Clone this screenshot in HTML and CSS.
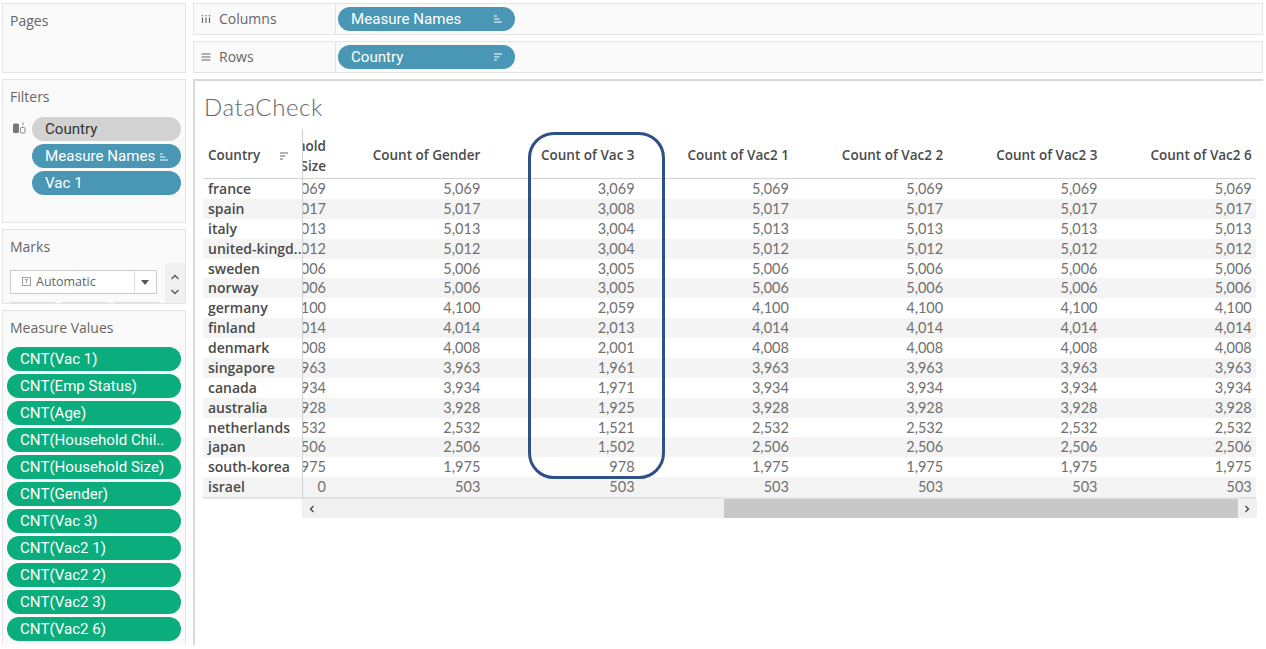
FILE: index.html
```html
<!DOCTYPE html>
<html lang="en">
<head>
    <meta charset="UTF-8">
    <title>DataCheck</title>
    <link rel="stylesheet" href="styles.css">
</head>
<body>
    <div class="app">
        <aside class="side">
            <section class="panel pages-panel">
                <h2 class="panel-title">Pages</h2>
            </section>
            <section class="panel filters-panel">
                <h2 class="panel-title">Filters</h2>
                <div class="filter-list">
                    <svg class="ds-icon" viewBox="0 0 14 14"><path d="M1 3.500C1 2 7 2 7 3.500V11c0 1.500-6 1.500-6 0z" fill="#777"/><rect x="8.500" y="6.500" width="4.500" height="5.500" rx="1" fill="none" stroke="#888"/><path d="M11 1.500v3" stroke="#888"/></svg>
                    <div class="pill pill-grey">Country</div>
                    <div class="pill pill-blue">Measure Names <svg class="sort-icon" viewBox="0 0 10 8"><path d="M1 1h3M1 4h5.500M1 7h8" stroke="#fff"/></svg></div>
                    <div class="pill pill-blue">Vac 1</div>
                </div>
            </section>
            <section class="panel marks-panel">
                <h2 class="panel-title">Marks</h2>
                <div class="marks-row">
                    <div class="mark-select">
                        <span class="mark-type"><svg class="mark-icon" viewBox="0 0 10 10"><rect x="0.500" y="0.500" width="9" height="9" fill="none" stroke="#999"/><path d="M3 3h4M5 3v4" stroke="#999"/></svg>Automatic</span>
                        <span class="mark-arrow"></span>
                    </div>
                    <div class="mark-scroll">
                        <svg viewBox="0 0 10 6"><path d="M1.500 5L5 1.500 8.500 5" fill="none" stroke="#555" stroke-width="1.300"/></svg>
                        <svg viewBox="0 0 10 6"><path d="M1.500 1L5 4.500 8.500 1" fill="none" stroke="#555" stroke-width="1.300"/></svg>
                    </div>
                </div>
                <div class="mark-buttons"><span></span><span></span><span></span></div>
            </section>
            <section class="panel values-panel">
                <h2 class="panel-title">Measure Values</h2>
                <div class="value-list">
                    <div class="pill pill-green">CNT(Vac 1)</div>
                    <div class="pill pill-green">CNT(Emp Status)</div>
                    <div class="pill pill-green">CNT(Age)</div>
                    <div class="pill pill-green">CNT(Household Chil..</div>
                    <div class="pill pill-green">CNT(Household Size)</div>
                    <div class="pill pill-green">CNT(Gender)</div>
                    <div class="pill pill-green">CNT(Vac 3)</div>
                    <div class="pill pill-green">CNT(Vac2 1)</div>
                    <div class="pill pill-green">CNT(Vac2 2)</div>
                    <div class="pill pill-green">CNT(Vac2 3)</div>
                    <div class="pill pill-green">CNT(Vac2 6)</div>
                </div>
            </section>
        </aside>

        <main class="main">
            <div class="shelf">
                <div class="shelf-label"><svg class="shelf-icon" viewBox="0 0 10 10"><path d="M1.500 3.500V9M5 3.500V9M8.500 3.500V9M1.500 1v1.300M5 1v1.300M8.500 1v1.300" stroke="#666" stroke-width="1.200"/></svg>Columns</div>
                <div class="pill pill-blue shelf-pill">Measure Names <svg class="sort-icon" viewBox="0 0 10 8"><path d="M1 1h3M1 4h5.500M1 7h8" stroke="#fff"/></svg></div>
            </div>
            <div class="shelf">
                <div class="shelf-label"><svg class="shelf-icon" viewBox="0 0 10 10"><path d="M0.500 2h9M0.500 5h9M0.500 8h9" stroke="#666" stroke-width="1.200"/></svg>Rows</div>
                <div class="pill pill-blue shelf-pill">Country <svg class="sort-icon" viewBox="0 0 10 8"><path d="M1 1h8M1 4h5.500M1 7h3" stroke="#fff"/></svg></div>
            </div>

            <section class="view">
                <h1 class="view-title">DataCheck</h1>
                <div class="crosstab">
                    <div class="row head">
                        <div class="cell name">Country <svg class="head-sort" viewBox="0 0 10 8"><path d="M1 1h8M1 4h5.500M1 7h3" stroke="#666"/></svg></div>
                        <div class="cell clip wrap"><span>Household<br>Size</span></div>
                        <div class="cell">Count of Gender</div>
                        <div class="cell">Count of Vac 3</div>
                        <div class="cell">Count of Vac2 1</div>
                        <div class="cell">Count of Vac2 2</div>
                        <div class="cell">Count of Vac2 3</div>
                        <div class="cell">Count of Vac2 6</div>
                    </div>
                    <div class="row"><div class="cell name">france</div><div class="cell clip">5,069</div><div class="cell">5,069</div><div class="cell">3,069</div><div class="cell">5,069</div><div class="cell">5,069</div><div class="cell">5,069</div><div class="cell">5,069</div></div>
                    <div class="row"><div class="cell name">spain</div><div class="cell clip">5,017</div><div class="cell">5,017</div><div class="cell">3,008</div><div class="cell">5,017</div><div class="cell">5,017</div><div class="cell">5,017</div><div class="cell">5,017</div></div>
                    <div class="row"><div class="cell name">italy</div><div class="cell clip">5,013</div><div class="cell">5,013</div><div class="cell">3,004</div><div class="cell">5,013</div><div class="cell">5,013</div><div class="cell">5,013</div><div class="cell">5,013</div></div>
                    <div class="row"><div class="cell name">united-kingd..</div><div class="cell clip">5,012</div><div class="cell">5,012</div><div class="cell">3,004</div><div class="cell">5,012</div><div class="cell">5,012</div><div class="cell">5,012</div><div class="cell">5,012</div></div>
                    <div class="row"><div class="cell name">sweden</div><div class="cell clip">5,006</div><div class="cell">5,006</div><div class="cell">3,005</div><div class="cell">5,006</div><div class="cell">5,006</div><div class="cell">5,006</div><div class="cell">5,006</div></div>
                    <div class="row"><div class="cell name">norway</div><div class="cell clip">5,006</div><div class="cell">5,006</div><div class="cell">3,005</div><div class="cell">5,006</div><div class="cell">5,006</div><div class="cell">5,006</div><div class="cell">5,006</div></div>
                    <div class="row"><div class="cell name">germany</div><div class="cell clip">4,100</div><div class="cell">4,100</div><div class="cell">2,059</div><div class="cell">4,100</div><div class="cell">4,100</div><div class="cell">4,100</div><div class="cell">4,100</div></div>
                    <div class="row"><div class="cell name">finland</div><div class="cell clip">4,014</div><div class="cell">4,014</div><div class="cell">2,013</div><div class="cell">4,014</div><div class="cell">4,014</div><div class="cell">4,014</div><div class="cell">4,014</div></div>
                    <div class="row"><div class="cell name">denmark</div><div class="cell clip">4,008</div><div class="cell">4,008</div><div class="cell">2,001</div><div class="cell">4,008</div><div class="cell">4,008</div><div class="cell">4,008</div><div class="cell">4,008</div></div>
                    <div class="row"><div class="cell name">singapore</div><div class="cell clip">3,963</div><div class="cell">3,963</div><div class="cell">1,961</div><div class="cell">3,963</div><div class="cell">3,963</div><div class="cell">3,963</div><div class="cell">3,963</div></div>
                    <div class="row"><div class="cell name">canada</div><div class="cell clip">3,934</div><div class="cell">3,934</div><div class="cell">1,971</div><div class="cell">3,934</div><div class="cell">3,934</div><div class="cell">3,934</div><div class="cell">3,934</div></div>
                    <div class="row"><div class="cell name">australia</div><div class="cell clip">3,928</div><div class="cell">3,928</div><div class="cell">1,925</div><div class="cell">3,928</div><div class="cell">3,928</div><div class="cell">3,928</div><div class="cell">3,928</div></div>
                    <div class="row"><div class="cell name">netherlands</div><div class="cell clip">2,532</div><div class="cell">2,532</div><div class="cell">1,521</div><div class="cell">2,532</div><div class="cell">2,532</div><div class="cell">2,532</div><div class="cell">2,532</div></div>
                    <div class="row"><div class="cell name">japan</div><div class="cell clip">2,506</div><div class="cell">2,506</div><div class="cell">1,502</div><div class="cell">2,506</div><div class="cell">2,506</div><div class="cell">2,506</div><div class="cell">2,506</div></div>
                    <div class="row"><div class="cell name">south-korea</div><div class="cell clip">1,975</div><div class="cell">1,975</div><div class="cell">978</div><div class="cell">1,975</div><div class="cell">1,975</div><div class="cell">1,975</div><div class="cell">1,975</div></div>
                    <div class="row"><div class="cell name">israel</div><div class="cell clip">0</div><div class="cell">503</div><div class="cell">503</div><div class="cell">503</div><div class="cell">503</div><div class="cell">503</div><div class="cell">503</div></div>
                    <div class="highlight"></div>
                </div>
                <div class="scrollbar">
                    <svg class="scroll-arrow" viewBox="0 0 6 8"><path d="M4.500 1L1.500 4l3 3" fill="none" stroke="#444" stroke-width="1.300"/></svg>
                    <div class="scroll-track"><div class="scroll-thumb"></div></div>
                    <svg class="scroll-arrow" viewBox="0 0 6 8"><path d="M1.500 1l3 3-3 3" fill="none" stroke="#444" stroke-width="1.300"/></svg>
                </div>
            </section>
        </main>
    </div>
</body>
</html>
```
FILE: styles.css
```css
html, body {
    margin: 0;
    height: 100%;
    background: #fff;
    overflow: hidden;
}

body {
    font-family: "Open Sans", "Lato", sans-serif;
    color: #555;
}

.app {
    display: flex;
    gap: 7px;
    width: 1261px;
    height: 642px;
    padding: 3px 0 0 2px;
}

.side {
    display: flex;
    flex-direction: column;
    gap: 6px;
    width: 184px;
    flex: none;
}

.panel {
    background: #fafafa;
    border: 1px solid #e4e4e4;
    box-sizing: border-box;
    overflow: hidden;
}

.panel-title {
    margin: 0;
    padding: 8px 0 0 7px;
    font-size: 14px;
    font-weight: 400;
    line-height: 18px;
    color: #666;
}

.pages-panel { height: 70px; }
.filters-panel { height: 144px; }
.marks-panel { height: 75px; }
.values-panel { flex: 1; border-bottom: 0; }

.pill {
    height: 24px;
    line-height: 24px;
    border-radius: 12px;
    padding-left: 13px;
    font-family: "Roboto", sans-serif;
    font-size: 15.100px;
    box-sizing: border-box;
    color: #fff;
    white-space: nowrap;
}

.pill-grey { background: #d2d2d2; color: #333; }
.pill-blue { background: #4997b4; }
.pill-green { background: #0aad7b; }

.sort-icon {
    width: 10px;
    height: 8px;
}

.filter-list {
    position: relative;
    display: flex;
    flex-direction: column;
    gap: 3px;
    margin: 11px 4px 0 29px;
}

.ds-icon {
    position: absolute;
    left: -20px;
    top: 4px;
    width: 14px;
    height: 14px;
}

.marks-row {
    display: flex;
    align-items: flex-start;
    gap: 8px;
    margin: 7px 0 0 7px;
}

.mark-select {
    display: flex;
    width: 148px;
    height: 24px;
    margin-top: 7px;
    background: #fff;
    border: 1px solid #ccc;
    box-sizing: border-box;
}

.mark-type {
    flex: 1;
    padding-left: 11px;
    font-size: 12.500px;
    line-height: 22px;
    color: #666;
    border-right: 1px solid #ddd;
}

.mark-icon {
    width: 9px;
    height: 9px;
    margin-right: 5px;
}

.mark-arrow {
    width: 21px;
    position: relative;
}

.mark-arrow::after {
    content: "";
    position: absolute;
    left: 6px;
    top: 9px;
    border: 4.500px solid transparent;
    border-top: 5px solid #555;
    border-bottom: 0;
}

.mark-scroll {
    display: flex;
    flex-direction: column;
    justify-content: center;
    align-items: center;
    gap: 9px;
    width: 20px;
    height: 43px;
    background: #f0f0f0;
}

.mark-scroll svg {
    width: 10px;
    height: 6px;
}

.mark-buttons {
    display: flex;
    gap: 7px;
    margin: -4px 0 0 7px;
}

.mark-buttons span {
    width: 45px;
    height: 6px;
    border: 1px solid #ddd;
    box-sizing: border-box;
    background: #fff;
}

.value-list {
    display: flex;
    flex-direction: column;
    gap: 3px;
    margin: 10px 4px 0 4px;
}

.main {
    flex: 1;
    display: flex;
    flex-direction: column;
    gap: 6px;
    min-width: 0;
}

.shelf {
    display: flex;
    align-items: center;
    height: 32px;
    background: #fafafa;
    border: 1px solid #e4e4e4;
    box-sizing: border-box;
}

.shelf-label {
    width: 142px;
    height: 100%;
    padding-left: 7px;
    box-sizing: border-box;
    border-right: 1px solid #e4e4e4;
    font-size: 14px;
    line-height: 29px;
    color: #666;
}

.shelf-icon {
    width: 10px;
    height: 10px;
    margin-right: 8px;
}

.shelf-pill {
    width: 177px;
    margin-left: 2px;
    display: flex;
    justify-content: space-between;
    align-items: center;
    padding-right: 12px;
}

.view {
    flex: 1;
    background: #fff;
    border-top: 2px solid #d8d8d8;
    border-left: 2px solid #d8d8d8;
    padding: 0 0 0 8px;
}

.view-title {
    margin: 0;
    padding-top: 11px;
    padding-left: 1px;
    font-family: "Lato", sans-serif;
    font-size: 24px;
    font-weight: 300;
    line-height: 30px;
    letter-spacing: 0.600px;
    color: #666;
}

.crosstab {
    position: relative;
    margin-top: 7px;
    width: 1053px;
}

.crosstab::after {
    content: "";
    position: absolute;
    left: 99px;
    top: 0;
    bottom: 0;
    width: 1px;
    background: #cfcfcf;
}

.row {
    display: grid;
    grid-template-columns: 99px 29px repeat(6, 154.300px);
    height: 19.875px;
    overflow: hidden;
    font-family: "Lato", sans-serif;
    font-size: 14.500px;
    line-height: 19.875px;
    color: #707070;
}

.row:nth-child(odd) {
    background: #f4f4f4;
}

.row.head {
    height: 50px;
    padding-top: 4px;
    box-sizing: border-box;
    align-items: center;
    border-bottom: 1px solid #d4d4d4;
    background: none;
    color: #4a4a4a;
    font-family: "Open Sans", sans-serif;
    font-size: 13.500px;
}

.row:nth-child(17) {
    border-bottom: 2px solid #e4e4e4;
}

.row.head .cell {
    font-weight: 600;
}

.cell {
    display: flex;
    justify-content: flex-end;
    padding-right: 5px;
    white-space: nowrap;
    min-width: 0;
}

.cell.name {
    justify-content: flex-start;
    padding: 0 0 0 5px;
    font-family: "Open Sans", sans-serif;
    font-size: 14px;
    font-weight: 600;
    color: #4a4a4a;
}

.row.head .cell.name {
    justify-content: space-between;
    align-items: center;
    padding-right: 13px;
    font-size: 13.500px;
}

.head-sort {
    width: 10px;
    height: 8px;
}

.cell.clip {
    overflow: hidden;
}

.cell.wrap {
    line-height: 20px;
    text-align: right;
}

.highlight {
    position: absolute;
    left: 325px;
    top: 3px;
    width: 137px;
    height: 347px;
    box-sizing: border-box;
    border: 3px solid #2f5086;
    border-radius: 26px;
    pointer-events: none;
}

.scrollbar {
    display: flex;
    align-items: center;
    height: 19px;
    width: 955px;
    background: #f0f0f0;
    margin-left: 99px;
}

.scroll-arrow {
    flex: none;
    width: 6px;
    height: 8px;
    margin: 0 7px;
}

.scroll-track {
    flex: 1;
    min-width: 0;
    height: 100%;
}

.scroll-thumb {
    width: 514px;
    height: 100%;
    margin-left: 402px;
    background: #c8c8c8;
}
```
